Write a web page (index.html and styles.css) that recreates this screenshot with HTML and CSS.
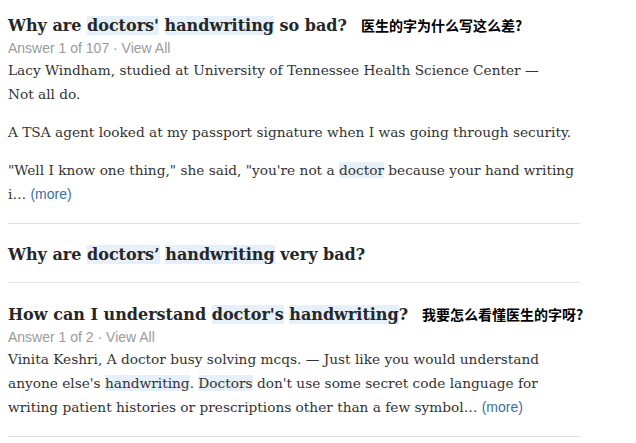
FILE: index.html
```html
<!DOCTYPE html>
<html>
<head>
<meta charset="utf-8">
<link rel="stylesheet" href="styles.css">
</head>
<body>
<div class="list">
  <div class="item">
    <div class="title"><span class="q">Why are <span class="hl">doctors'</span> <span class="hl">handwriting</span> so bad?</span><span class="cn">医生的字为什么写这么差?</span></div>
    <div class="meta">Answer 1 of 107 · View All</div>
    <div class="answer">
      <p>Lacy Windham, studied at University of Tennessee Health Science Center —<br>Not all do.</p>
      <p>A TSA agent looked at my passport signature when I was going through security.</p>
      <p>"Well I know one thing," she said, "you're not a <span class="hl">doctor</span> because your hand writing i… <span class="more">(more)</span></p>
    </div>
  </div>
  <div class="item">
    <div class="title"><span class="q">Why are <span class="hl">doctors’</span> <span class="hl">handwriting</span> very bad?</span></div>
  </div>
  <div class="item">
    <div class="title"><span class="q">How can I understand <span class="hl">doctor's</span> <span class="hl">handwriting</span>?</span><span class="cn">我要怎么看懂医生的字呀?</span></div>
    <div class="meta">Answer 1 of 2 · View All</div>
    <div class="answer">
      <p>Vinita Keshri, A doctor busy solving mcqs. — Just like you would understand anyone else's <span class="hl">handwriting</span>. <span class="hl">Doctors</span> don't use some secret code language for writing patient histories or prescriptions other than a few symbol… <span class="more">(more)</span></p>
    </div>
  </div>
</div>
</body>
</html>
```
FILE: styles.css
```css
body {
  margin: 0;
  background: #fff;
}
.list {
  width: 572px;
  margin-left: 8px;
  padding-top: 13px;
}
.item {
  border-bottom: 1px solid #e2e2e2;
  padding-bottom: 15px;
  margin-bottom: 19px;
}
.title {
  display: flex;
  align-items: baseline;
  white-space: nowrap;
  font-family: "DejaVu Serif", Georgia, serif;
  font-weight: bold;
  font-size: 16px;
  line-height: 24px;
  color: #262626;
}
.cn {
  font-family: "Noto Sans CJK SC", sans-serif;
  font-weight: bold;
  font-size: 14px;
  color: #000;
  margin-left: 14px;
}
.hl {
  background: #e6f0fa;
}
.meta {
  font-family: "Liberation Sans", Arial, sans-serif;
  font-size: 14px;
  line-height: 19px;
  color: #9a9a9a;
  margin-top: 1px;
}
.answer {
  font-family: "DejaVu Serif", Georgia, serif;
  font-size: 13.7px;
  line-height: 24px;
  color: #333;
  padding-bottom: 2px;
}
.answer p {
  margin: 0 0 14px 0;
}
.answer p:last-child {
  margin-bottom: 0;
}
.more {
  font-family: "Liberation Sans", Arial, sans-serif;
  font-size: 14px;
  color: #3b6ea8;
}
```
